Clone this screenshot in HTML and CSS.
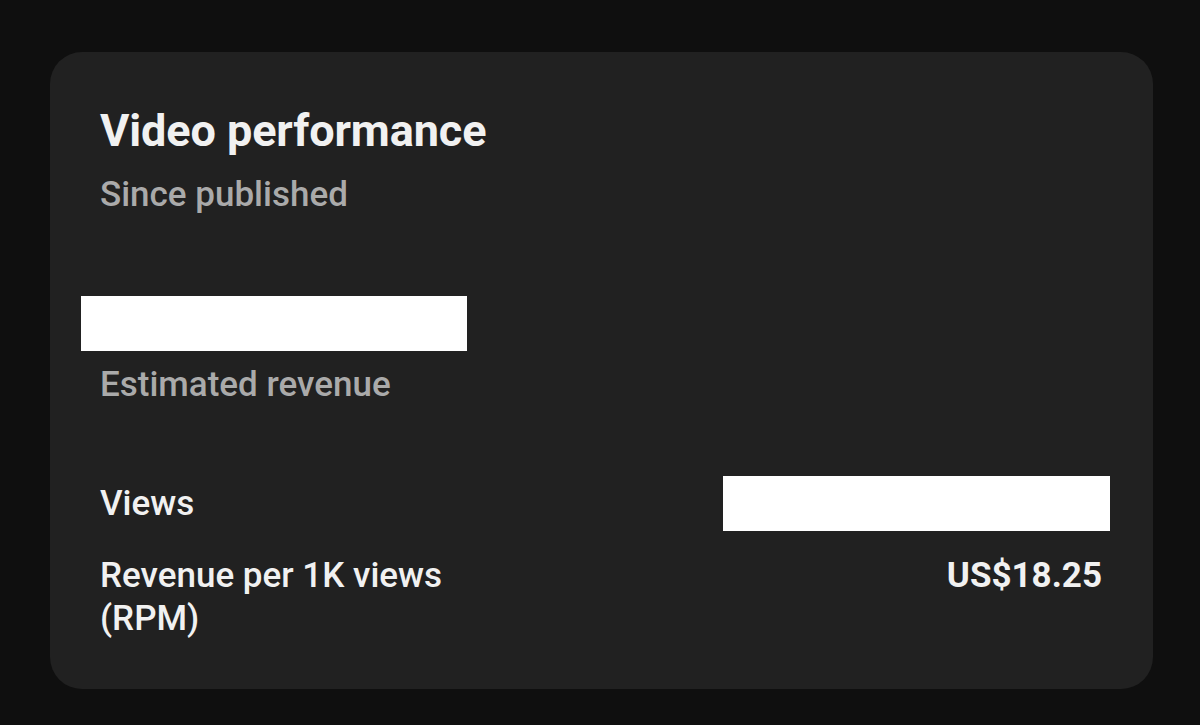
FILE: index.html
```html
<!DOCTYPE html>
<html>
<head>
<meta charset="utf-8">
<link rel="stylesheet" href="styles.css">
</head>
<body>
<div class="card">
  <h1 class="title">Video performance</h1>
  <div class="subtitle">Since published</div>
  <div class="redact redact-main"></div>
  <div class="label">Estimated revenue</div>
  <div class="rows">
    <div class="row">
      <div class="row-name">Views</div>
      <div class="redact redact-views"></div>
    </div>
    <div class="row row-rpm">
      <div class="row-name">Revenue per 1K views<br>(RPM)</div>
      <div class="row-value">US$18.25</div>
    </div>
  </div>
</div>
</body>
</html>
```

FILE: styles.css
```css
html, body {
  margin: 0;
  padding: 0;
  background: #0f0f0f;
  width: 1200px;
  height: 725px;
  overflow: hidden;
  font-family: Roboto, "Liberation Sans", sans-serif;
}
body {
  padding: 52px 47px 0 50px;
  box-sizing: border-box;
}
.card {
  background: #212121;
  border-radius: 32px;
  height: 637px;
  box-sizing: border-box;
  padding: 53px 51px 0 50px;
  color: #f1f1f1;
}
.title {
  margin: 0;
  font-size: 45px;
  font-weight: 700;
  line-height: 52px;
  color: #f1f1f1;
  letter-spacing: -0.1px;
}
.subtitle {
  margin-top: 16px;
  font-size: 35px;
  font-weight: 500;
  line-height: 43px;
  color: #aaaaaa;
}
.redact {
  background: #ffffff;
  height: 55px;
}
.redact-main {
  width: 386px;
  margin-left: -19px;
  margin-top: 80px;
}
.label {
  margin-top: 12px;
  font-size: 35px;
  font-weight: 500;
  line-height: 43px;
  color: #aaaaaa;
}
.rows {
  margin-top: 76px;
}
.row {
  display: flex;
  justify-content: space-between;
  align-items: flex-start;
  font-size: 35px;
  font-weight: 500;
  line-height: 43px;
}
.row-rpm {
  margin-top: 29px;
}
.row-name {
  color: #f1f1f1;
}
.redact-views {
  width: 387px;
  margin-right: -8px;
  margin-top: -6px;
  margin-bottom: -6px;
}
.row-value {
  color: #f1f1f1;
  font-weight: 700;
  margin-top: 0;
}
```
